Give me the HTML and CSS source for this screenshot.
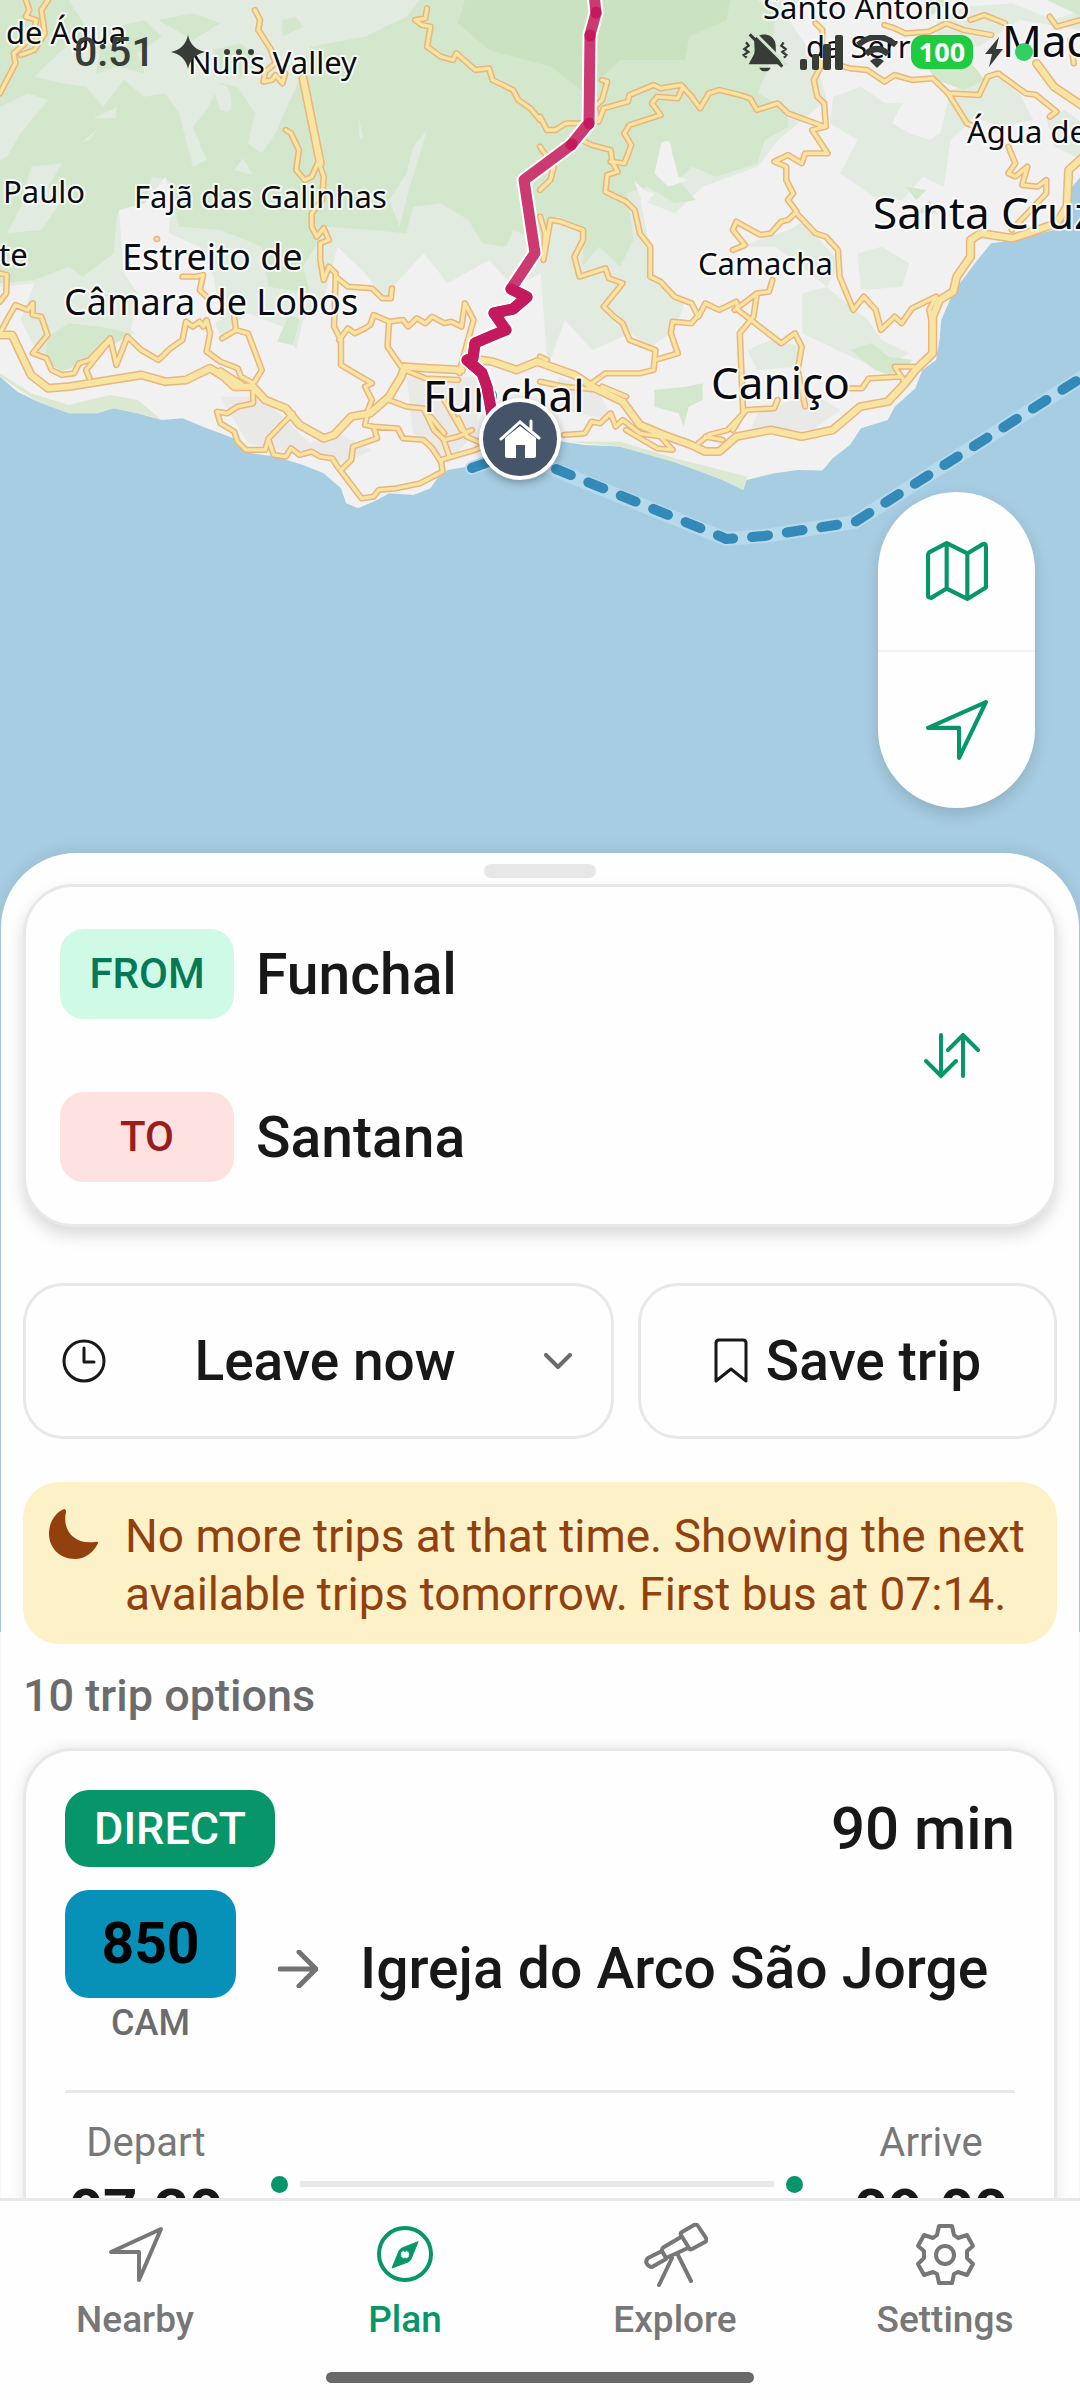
FILE: index.html
```html
<!DOCTYPE html>
<html lang="en">
<head>
<meta charset="utf-8">
<meta name="viewport" content="width=device-width, initial-scale=1">
<title>Plan a trip</title>
<link rel="stylesheet" href="styles.css">
</head>
<body>
<div class="app">
  <svg class="map" viewBox="0 0 1080 1632" preserveAspectRatio="xMidYMin slice" role="img" aria-label="Map of southern Madeira">
    <defs>
      <g id="minor">
        <path d="M75 0L85 30 75 50 105 60 95 110 40 160 45 190 0 280M140 0L120 30 130 100 100 150 60 165"/>
        <path d="M740 30L755 60 750 90 785 145 800 190 770 215 765 245 790 240 800 225 820 250 828 220"/>
        <path d="M1240 25L1235 55 1205 60 1225 75 1250 80 1240 140 1280 170 1315 180 1325 160 1380 210 1420 205 1430 240 1490 270 1505 300 1540 325 1568 360"/>
        <path d="M830 390L845 400 868 450 860 510 885 540 905 530 925 485 940 530 935 600 905 640 905 680 920 710 940 685 955 720 930 730 930 780 940 840 955 800 975 820 970 980 990 1020 990 1095 1080 1150 1060 1160 1080 1200 1065 1240"/>
        <path d="M975 830L1010 860 1080 865 1110 895 1135 895 1138 865M985 1020L1010 985 1030 1000 1060 985 1075 975 1085 945 1130 965 1170 960 1185 980 1210 955 1235 970 1255 950 1290 970 1310 965 1340 980 1350 910 1375 960 1340 1090 1335 1120"/>
        <path d="M1130 965L1125 1040 1165 1100M1175 1110L1235 1135 1330 1140"/>
        <path d="M0 820L20 825 18 880 0 905M0 1000L20 960 45 915 80 930 95 910 95 945 120 950 138 1005 95 1060 135 1075 150 1110 180 1125 215 1120 230 1090 260 1080 320 1015 338 1095 370 1010 410 1050 460 1080 495 1045 530 1020 540 965 560 980 580 965 590 980 600 960 610 1000 600 1055 640 1085 690 1105 700 1130 735 1150M320 1020L250 1110 260 1135"/>
        <path d="M530 830L570 830 590 825 580 870 600 890M455 717L456 717M680 950L685 990 645 1015M685 990L720 1000 760 1110 740 1145"/>
        <path d="M735 1160L735 1210 690 1220 660 1240 630 1235 640 1270 680 1295 690 1325 715 1350 770 1350 780 1315 850 1240M780 1320L795 1365 830 1370 845 1345 870 1365 905 1355 930 1370 965 1375 980 1400 1050 1495 1085 1490 1100 1470 1150 1465 1220 1450 1285 1415 1280 1380 1380 1350 1400 1340"/>
        <path d="M990 1410L1020 1380 1025 1340 1095 1315 1085 1280 1060 1275 1065 1250M1085 1280L1155 1285 1170 1315 1230 1320 1255 1345 1280 1385M1130 1200L1180 1220 1230 1225 1260 1290 1290 1320 1330 1310 1370 1290M1290 1325L1305 1370M1250 1250L1290 1300M1330 1255L1355 1310 1400 1330M1290 1200L1340 1290"/>
        <g transform="translate(1568 0)">
          <path d="M0 350L20 390 45 390 75 370 120 370M180 240L195 245 180 300 160 320 165 355M170 365L185 325 255 305 260 285 330 255 350 265 410 255 440 290 465 325 490 280 520 270 580 285 610 295 630 330 690 310 720 340 825 380M415 260L400 295 340 290 325 310 350 345 260 375 245 400 265 435 245 490 205 485"/>
          <path d="M120 420L150 435 205 450 210 485 225 515 195 525 190 575 250 605 275 630 290 700 320 740 320 830 350 845 390 890 440 910 460 950 480 910 520 930 570 905 575 930 700 1030 740 1000 760 1040 748 1110 770 1220"/>
          <path d="M800 70L820 90 815 200 795 240 805 290 825 310 830 380 790 390 835 460 770 460 760 490 720 465 680 485 715 500 715 540 735 580 720 600 745 635 720 660 700 665 670 700 640 705 570 665 560 690 595 735 560 750"/>
          <path d="M745 640L800 700 830 710 865 750 870 830 910 930 940 890 975 930 990 990 1030 950 1050 970 1080 925 1150 890M1150 890L1130 930 1140 980"/>
          <path d="M865 195L900 205 950 210 1000 245 1030 225 1080 240 1140 235 1185 280 1240 370 1270 385M1185 280L1275 285 1300 230 1330 220 1410 280 1440 285 1500 335 1480 350M1000 75L1030 85 1060 100 1130 95 1180 70 1230 90 1310 105M1250 60L1290 45 1350 70M1480 50L1500 80 1568 60M1540 120L1550 190"/>
          <path d="M1360 440L1380 490 1360 520 1380 530 1415 500 1400 555 1445 560 1470 540 1470 580 1370 690"/>
          <path d="M0 440L40 500 30 540 0 570M0 650L15 700 10 780 30 660 60 665 125 690 125 720 100 770 115 830 190 805 200 835 240 850 185 920 215 950 240 970 260 1020 335 1050 330 1110 290 1120 190 1120 150 1150"/>
          <path d="M335 1080L400 1060 380 1000 385 965 440 970 460 945M675 840L665 875 630 880 620 950 580 1000 590 1240 560 1290M565 930L630 880M180 1160L250 1190M0 1070L20 1080"/>
          <path d="M0 1145L70 1160 170 1170M70 1305L130 1300 150 1265 175 1270 205 1240 220 1280 240 1260 290 1300 350 1310 385 1350 340 1345 250 1290M460 1330L490 1305 545 1290 600 1230 680 1225 690 1200M480 1310L530 1320M900 1165L935 1165 955 1135 1050 1130 1060 1150M1085 1100L1030 1100 1045 1125"/>
        </g>
      </g>
      <g id="major">
        <path d="M0 1005L35 1005 60 1060 90 1125 140 1165 200 1160 410 1125 480 1145 540 1140 610 1105 650 1130 680 1160 735 1160 770 1200 830 1225 870 1275 940 1315 970 1305 1020 1250 1075 1240 1130 1190 1165 1130 1175 1100 1240 1105 1340 1110M640 1115L700 1155M880 235L930 490"/>
        <path d="M1395 1080L1430 1085 1500 1110 1560 1085 1600 1100 1668 1125 1728 1165 1808 1205 1858 1275 1928 1305 2008 1335 2048 1355 2088 1355 2138 1310 2238 1290 2328 1310 2418 1290 2498 1220 2578 1205 2628 1150 2658 1110 2708 1060 2708 950 2728 900 2768 875 2778 830 2818 770 2818 720 2848 700 2938 715 2998 695 3068 670 3098 620 3103 510 3146 470M3010 190L3060 260 3146 320"/>
      </g>
    </defs>
    <rect class="sea" width="1080" height="1632"/>
    <g transform="scale(.3444 .3333)">
      <path class="land" d="M0 0H3146V520L3113 560 3098 650 3060 690 2948 720 2878 730 2838 780 2788 850 2758 900 2733 960 2728 1020 2718 1080 2678 1110 2658 1165 2598 1220 2578 1260 2500 1285 2468 1335 2418 1375 2388 1412 2318 1410 2248 1420 2168 1440 2158 1470 2098 1440 2038 1415 1968 1390 1898 1360 1798 1340 1698 1335 1628 1325 1500 1380 1360 1400 1300 1410 1270 1435 1250 1465 1200 1485 1130 1480 1095 1500 1040 1525 1005 1510 990 1465 940 1420 880 1395 800 1370 730 1360 700 1340 690 1320 640 1300 600 1285 530 1255 470 1260 400 1240 330 1225 280 1240 200 1240 110 1205 50 1175 0 1130Z"/>
      <path class="scrub" d="M0 0H2320L2290 60 2370 180 2400 300 2260 420 2200 500 2040 560 1960 640 1860 600 1900 820 1990 900 1960 990 1890 1040 1830 1000 1720 1050 1640 960 1590 1100 1570 820 1490 860 1420 780 1300 850 1230 760 1150 850 1120 900 1060 820 980 740 940 900 880 960 860 1050 820 980 720 940 640 1010 600 900 480 860 460 980 390 1000 280 1060 200 1110 120 1080 60 960 100 850 0 860Z"/>
      <path class="forest" d="M0 0H2200L2250 40 2240 180 2200 280 2280 320 2290 380 2220 420 2200 490 2080 530 2010 500 1970 540 2020 600 1960 610 1880 560 1820 580 1840 720 1800 800 1740 740 1690 800 1700 680 1620 650 1560 720 1490 690 1470 740 1400 730 1360 660 1280 610 1200 620 1180 700 1080 690 950 680 880 800 900 880 780 860 760 740 640 690 520 680 490 540 440 530 420 620 340 640 330 760 240 830 200 800 100 840 0 850Z"/>
      <path class="forest deep" d="M1350 0H2120L2110 60 2000 110 1990 180 1800 180 1700 280 1600 200 1420 150 1330 70Z"/>
      <path class="scrub" d="M200 0H1220L1180 50 1060 110 900 140 860 260 800 400 760 460 720 430 740 340 690 260 640 250 600 330 560 380 600 480 560 500 520 340 480 280 420 290 360 240 300 320 250 260 180 250 100 230 180 150 260 100ZM0 320L80 280 140 300 60 400 20 470 0 480ZM90 500L180 490 140 560 180 600 120 690 20 700 60 620ZM680 510L705 475 735 525ZM240 425L285 385 260 420ZM270 355L340 320 335 355ZM620 270Q660 230 670 290T640 330ZM1200 440L1240 390 1190 560 1160 680 1130 600 1180 520ZM1040 350L1055 410 1045 420Z"/>
      <path class="forest" d="M1260 110L1340 160 1440 230 1410 290 1280 230ZM460 60L560 40 640 70 560 120ZM820 60L860 50 880 80 820 110ZM300 90L420 60 470 110 400 160 420 220 340 200 280 220ZM620 150L700 130 760 190 700 230 640 210ZM840 940L870 960 850 1035 805 1025ZM140 1010L200 970 290 980 380 1000 290 1060 180 1115 130 1080Z"/>
      <path class="land" d="M345 630L420 610 480 530 500 600 490 700 580 740 620 830 640 960 560 1000 470 1060 380 990 400 880 360 820ZM1920 430Q1950 410 1950 450L1970 530 2000 540 1940 560 1900 520ZM1840 540L1870 570 1900 580 1870 620Z"/>
      <path class="scrub" d="M2420 290L2500 260 2570 310 2620 310 2590 370 2640 400 2700 420 2730 400 2760 270 2900 230 2960 280 3000 360 2900 380 2830 350 2760 420 2740 560 2680 530 2620 600 2550 600 2440 520 2490 420 2410 370ZM2150 740L2290 690 2340 660 2380 720 2440 790 2400 860 2330 800 2250 740ZM2330 880L2400 860 2470 920 2520 960 2560 1020 2640 1060 2560 1110 2450 1060 2330 1000ZM2720 60L2800 20 2940 10 3060 60 3140 30 3140 90 2960 60 2840 140 2720 120ZM2490 760L2560 740 2640 790 2620 860 2500 870ZM2170 1050L2240 1020 2330 1040 2320 1100 2200 1110ZM3040 360L3090 330 3146 370V480L3060 440Z"/>
      <path class="forest" d="M2690 200L2820 190 2860 240 2800 270 2720 240ZM2630 560L2690 570 2660 600ZM2660 640L2700 600 2720 640ZM2470 1050L2530 1030 2580 1070 2650 1080 2600 1130 2540 1110ZM1900 1170L1990 1160 2040 1150 2040 1200 2000 1220 1985 1280 1970 1240 1900 1220ZM2700 0H2760L2700 50 2680 20ZM3040 0H3146V50L3080 20Z"/>
      <path class="shore" d="M0 1120L90 1180 200 1215 320 1185 400 1200 470 1260 400 1240 330 1225 280 1240 200 1240 110 1205 0 1130ZM1640 1325L1800 1325 1960 1375 2170 1430 2158 1470 2098 1440 1968 1390 1798 1340Z"/>
      <path class="urban" d="M640 1190L760 1190 900 1330 980 1300 1080 1350 1000 1390 900 1370 720 1330ZM1180 1130L1400 1130 1380 1300 1300 1390 1200 1300ZM2200 1240L2360 1180 2440 1230 2360 1290 2180 1290ZM1620 1130L1740 1180 1780 1260 1620 1230Z"/>
      <use href="#minor" class="road casing"/>
      <use href="#major" class="road casing wide"/>
      <use href="#minor" class="road"/>
      <use href="#major" class="road wide"/>
    </g>
    <g class="ferry">
      <path class="ferry-glow" d="M472 468L500 458M549 467L560 472 726 539 764 536 855 522 1084 376"/>
      <path class="ferry-line" d="M472 468L500 458M556 469L722 537 726 539 764 536 855 522 1084 376"/>
    </g>
    <g class="labels">
      <g class="village">
        <text x="6" y="44">de Água</text>
        <text x="188" y="74">Nuns Valley</text>
        <text x="3" y="203">Paulo</text>
        <text x="134" y="208">Fajã das Galinhas</text>
        <text x="-1" y="266">te</text>
        <text x="698" y="275">Camacha</text>
        <text x="967" y="143">Água de Pena</text>
        <text x="763" y="19">Santo António</text>
        <text x="806" y="58">da Serra</text>
      </g>
      <g class="town">
        <text x="122" y="270">Estreito de</text>
        <text x="64" y="315">Câmara de Lobos</text>
      </g>
      <g class="city">
        <text x="423" y="412">Funchal</text>
        <text x="711" y="399">Caniço</text>
        <text x="873" y="229">Santa Cruz</text>
        <text x="1002" y="57">Machico</text>
      </g>
    </g>
    <g class="route">
      <path class="route-edge" d="M594 -6L596 13 590 35 589 123 571 145 524 180 535 253 511 289 527 297 513 309 494 313 506 330 496 334 475 343 473 358 467 360 482 373 487 387 492 415"/>
      <path class="route-line" d="M594 -6L596 13 590 35 589 123 571 145 524 180 535 253 511 289 527 297 513 309 494 313 506 330 496 334 475 343 473 358 467 360 482 373 487 387 492 415"/>
      <path class="route-dense" d="M511 289L527 297 513 309 494 313 506 330 496 334 475 343 473 358 467 360 482 373 487 387 492 415M596 12L596 13M590 35L590 36M589 123L589 124M571 145L572 144"/>
    </g>
    <g class="home">
      <circle cx="520" cy="439" r="39"/>
      <path d="M505 438L520 426 536 438V456Q536 458 534 458H525V445H516V458H507Q505 458 505 456Z"/>
      <path class="roof" d="M501 439L520 422 539 438M531 421V431"/>
    </g>
  </svg>

  <header class="status">
    <span class="clock">0:51</span>
    <svg class="spark" viewBox="0 0 34 34" aria-hidden="true"><path d="M17 0Q20 14 34 17 20 20 17 34 14 20 0 17 14 14 17 0Z"/></svg>
    <svg class="dots" viewBox="0 0 32 8" aria-hidden="true"><circle cx="4" cy="4" r="3"/><circle cx="16" cy="4" r="3"/><circle cx="28" cy="4" r="3"/></svg>
    <span class="push"></span>
    <svg class="bell" viewBox="122 91 138 120" aria-label="Silent"><path d="M160 112C172 94 208 92 220 118 226 132 221 148 226 160L242 188H142L158 158C163 144 156 126 160 112ZM174 198H208Q204 209 191 209T174 198Z"/><path class="cut" d="M150 84L256 190"/><path class="line" d="M145 98L243 195"/><path class="thin" d="M134 122L142 132 129 142 141 151 127 160 136 168M247 122L240 132 253 142 243 151 255 160 248 168"/></svg>
    <svg class="signal" viewBox="0 0 43 35" aria-label="Signal"><rect y="24" width="7" height="11" rx="2"/><rect x="12" y="19" width="7" height="16" rx="2"/><rect x="23" y="9" width="8" height="26" rx="2"/><rect x="35" width="8" height="35" rx="2"/></svg>
    <svg class="wifi" viewBox="0 0 44 34" aria-label="Wi-Fi"><path class="arc" d="M3 10Q22-6 41 10M11 19Q22 9 33 19"/><path d="M15 26Q22 20 29 26L22 33Z"/></svg>
    <span class="battery">100</span>
    <svg class="bolt" viewBox="0 0 18 30" aria-label="Charging"><path d="M14 0L0 17H7L4 30 18 12H11Z"/></svg>
    <span class="live"></span>
  </header>

  <div class="stage">
    <div class="controls">
      <button type="button" aria-label="Map layers"><svg viewBox="0 0 60 60"><path d="M2 14Q2 13 3 12L20 3 40 13 55 4Q58 3 58 6V46L40 57 20 47 5 56Q2 56 2 54ZM20 3V47M40 13V57"/></svg></button>
      <button type="button" aria-label="My location"><svg viewBox="0 0 60 60"><path d="M58 3L2 28H32V57Z"/></svg></button>
    </div>
  </div>

  <main class="sheet">
    <div class="handle"></div>
    <form class="card search">
      <div class="fields">
        <div class="field"><label class="tag from" for="from">FROM</label><input id="from" type="text" value="Funchal"></div>
        <div class="field"><label class="tag to" for="to">TO</label><input id="to" type="text" value="Santana"></div>
      </div>
      <button class="swap" type="button" aria-label="Swap"><svg viewBox="0 0 56 46"><path d="M17 2V43M2 28L17 43 32 28M39 43V2M24 17L39 2 54 17"/></svg></button>
    </form>

    <div class="actions">
      <div class="when">
        <svg class="ico-clock" viewBox="0 0 44 44" aria-hidden="true"><circle cx="22" cy="22" r="20"/><path d="M22 9V23H32"/></svg>
        <select aria-label="Departure time"><option>Leave now</option><option>Leave at</option></select>
        <svg class="ico-down" viewBox="0 0 28 16" aria-hidden="true"><path d="M2 2L14 14 26 2"/></svg>
      </div>
      <button class="save" type="button">
        <svg viewBox="0 0 34 46" aria-hidden="true"><path d="M2 5Q2 2 5 2H29Q32 2 32 5V43L17 31 2 43Z"/></svg>
        <span>Save trip</span>
      </button>
    </div>

    <div class="notice">
      <svg viewBox="0 0 50 50" aria-hidden="true"><path d="M15 0Q17 0 17 3C13 20 24 36 46 33Q51 32 48 36A26 26 0 0 1 26 50C10 50 0 38 0 25C0 13 6 4 15 0Z"/></svg>
      <p>No more trips at that time. Showing the next available trips tomorrow. First bus at 07:14.</p>
    </div>

    <h2 class="count">10 trip options</h2>

    <article class="card trip">
      <div class="trip-top"><span class="badge">DIRECT</span><span class="duration">90 min</span></div>
      <div class="trip-line">
        <div class="line"><span class="number">850</span><span class="operator">CAM</span></div>
        <svg class="ico-to" viewBox="0 0 40 38" aria-hidden="true"><path d="M2 19H38M21 2L38 19 21 36"/></svg>
        <h3>Igreja do Arco São Jorge</h3>
      </div>
      <div class="trip-times">
        <div class="time"><span>Depart</span><strong>07:30</strong></div>
        <div class="track"><i class="stop"></i><i class="bar"></i><i class="stop"></i></div>
        <div class="time arrive"><span>Arrive</span><strong>09:00</strong></div>
      </div>
    </article>
  </main>

  <nav class="tabs">
    <ul>
      <li><a href="#nearby"><svg viewBox="0 0 66 66" aria-hidden="true"><path d="M59 8L9 31H37V59Z"/></svg>Nearby</a></li>
      <li><a href="#plan" class="active" aria-current="page"><svg viewBox="0 0 66 66" aria-hidden="true"><circle cx="33" cy="33" r="26"/><path class="needle" fill-rule="evenodd" d="M46 21L39 38Q38 40 36 41L20 47 27 30Q28 28 30 27ZM33 30A3 4 0 1 0 33 37 3 4 0 1 0 33 30Z"/></svg>Plan</a></li>
      <li><a href="#explore"><svg viewBox="0 0 66 66" aria-hidden="true"><path d="M40 11L52 4Q55 3 56 5L64 17Q65 20 63 21L50 28Q48 29 47 27L39 14Q38 12 40 11ZM39 16L22 26Q19 28 20 30L24 37 46 27M20 30L6 37Q3 40 5 43T10 46L24 38M30 37L17 64M36 34L49 60"/></svg>Explore</a></li>
      <li><a href="#settings"><svg viewBox="0 0 66 66" aria-hidden="true"><path d="M27 5H40L42 14 46 17 55 14 61 25 55 30V37L61 43 55 54 46 51 42 53 40 62H27L25 53 21 51 12 54 6 43 12 37V30L6 25 12 14 21 17 25 14Z"/><circle cx="33" cy="34" r="9"/></svg>Settings</a></li>
    </ul>
    <div class="gesture"></div>
  </nav>
</div>
</body>
</html>
```
FILE: styles.css
```css
* { box-sizing: border-box; }

body {
  margin: 0;
  background: #fefefe;
  color: #181818;
  font-family: Roboto, "Noto Sans", sans-serif;
}

button, input, select {
  font: inherit;
  color: inherit;
  background: none;
  border: 0;
  padding: 0;
  margin: 0;
}

svg { display: block; flex: none; }

.app {
  position: relative;
  display: flex;
  flex-direction: column;
  height: 100vh;
  overflow: hidden;
}

/* Map */
.map {
  position: absolute;
  top: 0;
  left: 0;
  width: 100%;
  height: 68%;
}
.sea { fill: #a7cde2; }
.land { fill: #f0f1f0; }
.scrub { fill: #e2ebdf; }
.forest { fill: #d2e7cb; }
.deep { fill: #cae2c0; }
.shore { fill: #dbe9d2; }
.urban { fill: #e9e9e8; }

.road {
  fill: none;
  stroke: #f9e5a2;
  stroke-width: 10;
  stroke-linecap: round;
  stroke-linejoin: round;
}
.road.wide { stroke-width: 18; }
.road.casing { stroke: #eab57e; stroke-width: 19; }
.road.casing.wide { stroke-width: 27; }

.ferry path {
  fill: none;
  stroke-linecap: round;
  stroke-linejoin: round;
}
.ferry .ferry-glow { stroke: #b6d9eb; stroke-width: 14; }
.ferry .ferry-line { stroke: #3389b7; stroke-width: 10; stroke-dasharray: 16 19; }

.labels {
  font-family: "Noto Sans", sans-serif;
  fill: #0b0b12;
  stroke: #fff;
  stroke-opacity: .8;
  stroke-width: 4;
  stroke-linejoin: round;
  paint-order: stroke;
}
.village { font-size: 31px; }
.town { font-size: 36px; }
.city { font-size: 44px; }

.route path {
  fill: none;
  stroke-linecap: round;
  stroke-linejoin: round;
}
.route .route-edge { stroke: #fff; stroke-width: 15; }
.route .route-line { stroke: #cc3a72; stroke-width: 11; }
.route .route-dense { stroke: #c5195e; stroke-width: 11; }

.home circle {
  fill: #455468;
  stroke: #fff;
  stroke-width: 4;
  filter: drop-shadow(0 3px 4px rgba(0, 0, 0, .3));
}
.home path { fill: #fff; }
.home .roof { fill: none; stroke: #fff; stroke-width: 3; stroke-linecap: round; }

/* Status bar */
.status {
  position: absolute;
  top: 0;
  left: 0;
  right: 0;
  display: flex;
  align-items: center;
  gap: 12px;
  height: 104px;
  padding: 0 47px 0 74px;
  color: #373c37;
}
.status svg { fill: currentColor; }
.status .clock { font-size: 41px; font-weight: 500; }
.spark { width: 34px; height: 34px; margin-left: 4px; }
.dots { width: 32px; height: 8px; margin-left: 6px; }
.push { flex: 1; }
.bell { width: 46px; height: 40px; }
.bell .line { stroke: currentColor; stroke-width: 9; }
.bell .thin { fill: none; stroke: currentColor; stroke-width: 7; }
.bell .cut { stroke: #d2e7cb; stroke-width: 9; }
.signal { width: 43px; height: 35px; }
.wifi { width: 44px; height: 34px; }
.wifi .arc { fill: none; stroke: currentColor; stroke-width: 6; }
.battery {
  width: 62px;
  padding: 0 2px;
  border-radius: 12px;
  background: #1fcb40;
  color: #fff;
  font: 700 27px/34px "Noto Sans", sans-serif;
  text-align: center;
}
.bolt { width: 18px; height: 30px; }
.live { width: 18px; height: 18px; border-radius: 50%; background: #34cf63; }

/* Map buttons */
.stage {
  position: relative;
  flex: none;
  display: flex;
  flex-direction: column;
  align-items: flex-end;
  padding: 492px 45px 45px;
}
.controls {
  display: flex;
  flex-direction: column;
  width: 157px;
  border-radius: 79px;
  background: #fefefe;
  box-shadow: 0 6px 16px rgba(0, 0, 0, .15);
  overflow: hidden;
}
.controls button {
  display: flex;
  align-items: center;
  justify-content: center;
  height: 158px;
}
.controls button + button { border-top: 2px solid #f3f3f3; }
.controls svg {
  width: 62px;
  height: 62px;
  fill: none;
  stroke: #069669;
  stroke-width: 4;
  stroke-linecap: round;
  stroke-linejoin: round;
}

/* Sheet */
.sheet {
  position: relative;
  flex: 1;
  min-height: 0;
  display: flex;
  flex-direction: column;
  margin: 0 1px;
  padding: 11px 22px 0;
  border-radius: 75px 75px 0 0;
  background: #fefefe;
  box-shadow: 0 -4px 16px rgba(0, 0, 0, .08);
  overflow: hidden;
}
.sheet > * { flex: none; }
.handle {
  align-self: center;
  width: 112px;
  height: 14px;
  border-radius: 7px;
  background: #e6e7e6;
}
.card {
  border: 3px solid #e8e8e7;
  border-radius: 50px;
  background: #fefefe;
}

.search {
  display: flex;
  align-items: center;
  margin-top: 6px;
  padding: 42px 74px 42px 34px;
  box-shadow: 0 8px 16px rgba(0, 0, 0, .15);
}
.fields {
  flex: 1;
  min-width: 0;
  display: flex;
  flex-direction: column;
  gap: 73px;
}
.field { display: flex; align-items: center; gap: 22px; }
.field input { flex: 1; min-width: 0; height: 90px; font-size: 57px; font-weight: 500; }
.tag {
  width: 174px;
  border-radius: 24px;
  font-size: 42px;
  font-weight: 500;
  line-height: 90px;
  text-align: center;
}
.from { background: #cffae5; color: #067a57; }
.to { background: #fee1e1; color: #9a1c1c; }
.swap { flex: none; }
.swap svg {
  width: 56px;
  height: 46px;
  fill: none;
  stroke: #069669;
  stroke-width: 4;
  stroke-linecap: round;
}

.actions {
  display: grid;
  grid-template-columns: 591fr 419fr;
  gap: 24px;
  margin-top: 56px;
}
.when, .save {
  display: flex;
  align-items: center;
  height: 156px;
  border: 3px solid #e8e8e7;
  border-radius: 40px;
  font-size: 55px;
  font-weight: 500;
}
.when { padding: 0 39px 0 36px; }
.when select { flex: 1; height: 100%; appearance: none; text-align-last: center; }
.when svg, .save svg {
  fill: none;
  stroke: currentColor;
  stroke-width: 3;
  stroke-linecap: round;
  stroke-linejoin: round;
}
.ico-clock { width: 44px; height: 44px; }
.when .ico-down { width: 28px; height: 16px; color: #6c6c6c; stroke-width: 4; }
.save { justify-content: center; gap: 18px; }
.save svg { width: 34px; height: 46px; }

.notice {
  display: flex;
  gap: 26px;
  margin-top: 43px;
  padding: 25px 16px 21px 26px;
  border-radius: 36px;
  background: #fdf1c7;
  color: #93400f;
  font-size: 46px;
  line-height: 58px;
}
.notice svg { width: 50px; height: 50px; margin-top: 2px; fill: currentColor; }
.notice p { flex: 1; margin: 0; }

.count {
  margin: 24px 0 0;
  color: #6c6c6c;
  font-size: 45px;
  font-weight: 500;
  line-height: 56px;
}

.trip {
  margin-top: 24px;
  padding: 39px 39px;
  box-shadow: 0 0 14px rgba(0, 0, 0, .1);
}
.trip-top { display: flex; align-items: center; justify-content: space-between; }
.badge {
  padding: 0 29px;
  border-radius: 24px;
  background: #069669;
  color: #fefefe;
  font-size: 45px;
  font-weight: 500;
  line-height: 77px;
}
.duration { font-size: 60px; font-weight: 500; line-height: 77px; }
.trip-line {
  display: flex;
  align-items: center;
  margin-top: 23px;
  padding-bottom: 42px;
  border-bottom: 3px solid #e8e8e7;
}
.line { display: flex; flex-direction: column; width: 171px; text-align: center; }
.number {
  border-radius: 24px;
  background: #0891b8;
  color: #000;
  font-size: 57px;
  font-weight: 700;
  line-height: 108px;
}
.operator { color: #6c6c6c; font-size: 36px; font-weight: 500; line-height: 50px; }
.ico-to {
  width: 40px;
  height: 38px;
  margin: 0 42px;
  fill: none;
  stroke: #737373;
  stroke-width: 5;
  stroke-linecap: round;
  stroke-linejoin: round;
}
.trip h3 { margin: 0; font-size: 57px; font-weight: 500; line-height: 72px; }
.trip-times { display: flex; align-items: center; margin-top: 23px; }
.time { display: flex; flex-direction: column; width: 162px; text-align: center; }
.time span { color: #787878; font-size: 40px; line-height: 54px; }
.time strong { font-size: 60px; line-height: 82px; }
.arrive { width: 168px; }
.track { flex: 1; display: flex; align-items: center; gap: 12px; margin: 0 44px; }
.stop { width: 17px; height: 17px; border-radius: 50%; background: #069669; }
.bar { flex: 1; height: 6px; background: #e8e8e7; }

/* Bottom tabs */
.tabs {
  position: relative;
  flex: none;
  padding: 20px 0 17px;
  border-top: 3px solid #e8e8e7;
  background: #fefefe;
}
.tabs ul { display: grid; grid-template-columns: repeat(4, 1fr); margin: 0; padding: 0; list-style: none; }
.tabs a {
  display: flex;
  flex-direction: column;
  align-items: center;
  gap: 9px;
  color: #777;
  font-size: 37px;
  font-weight: 500;
  line-height: 48px;
  text-decoration: none;
}
.tabs a.active { color: #069669; }
.tabs svg {
  width: 66px;
  height: 66px;
  fill: none;
  stroke: currentColor;
  stroke-width: 4;
  stroke-linecap: round;
  stroke-linejoin: round;
}
.tabs .needle { fill: currentColor; stroke-width: 1; }
.gesture {
  width: 428px;
  height: 11px;
  margin: 28px auto 0;
  border-radius: 6px;
  background: #6a6a6a;
}
```
